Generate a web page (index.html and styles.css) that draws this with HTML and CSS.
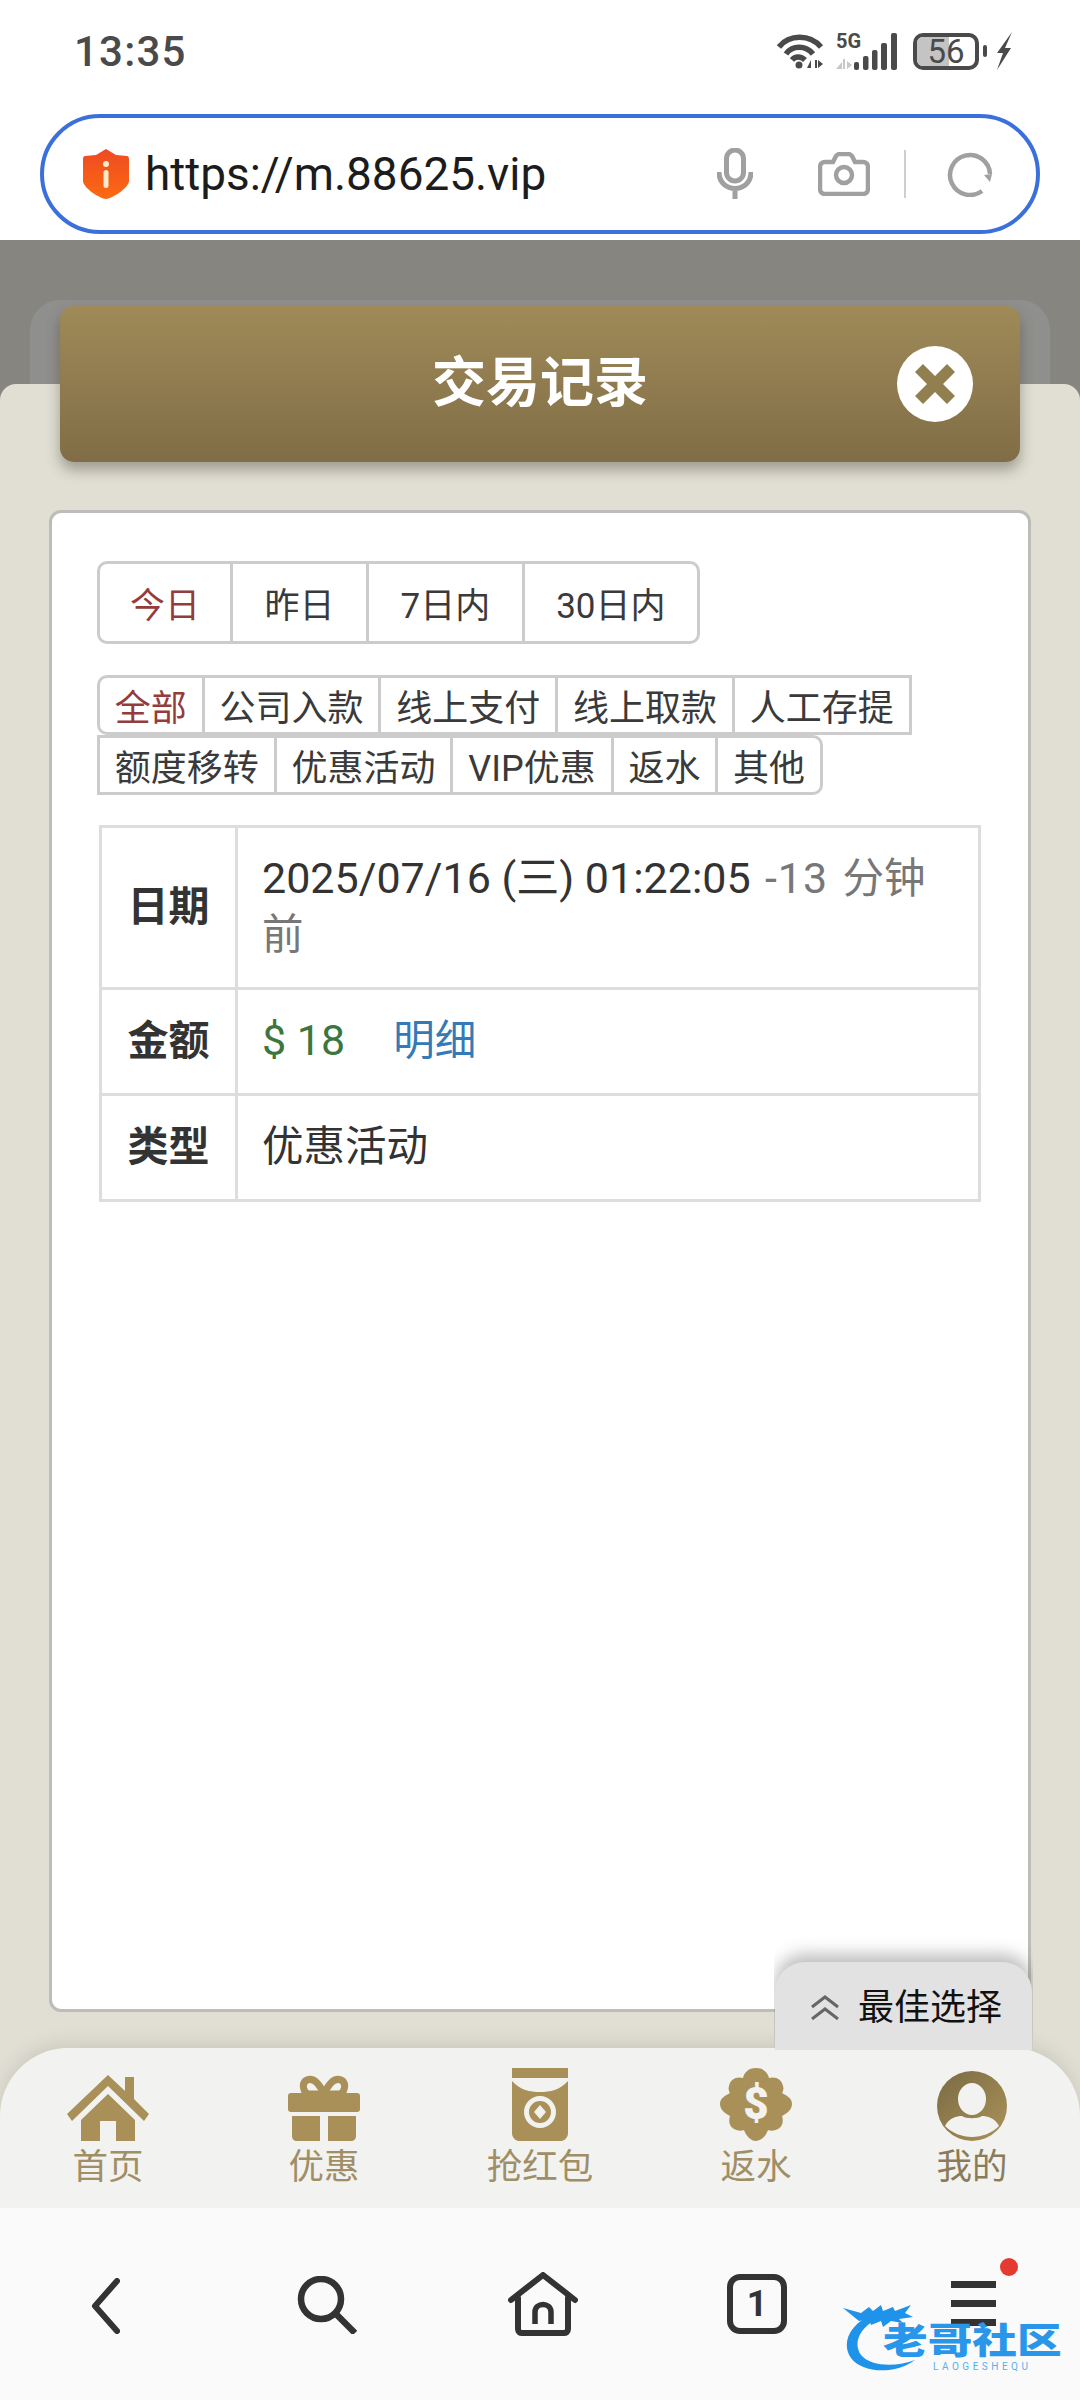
FILE: index.html
```html
<!DOCTYPE html>
<html lang="zh-CN">
<head>
<meta charset="utf-8">
<title>交易记录</title>
<link rel="stylesheet" href="styles.css">
</head>
<body>
<div class="app">
  <div class="status">
    <span class="time">13:35</span>
    <div class="status-icons">
      <svg class="ic-wifi" width="47" height="36" viewBox="0 0 47 36"><g fill="none" stroke="#4a4a4a" stroke-width="5.500"><path d="M2 14C12 1 33 1 44 14"/><path d="M9 21C15 12 29 12 36 21"/><path d="M15 27C18 23 24 23 28 27"/></g><circle cx="22" cy="32" r="3.500" fill="#4a4a4a"/><path d="M34 35v-8l-4 8zM38 27h2v8h-2zM41 27v8l5-4z" fill="#4a4a4a"/></svg>
      <div class="net">
        <span class="net-5g">5G</span>
        <svg width="62" height="38" viewBox="0 0 62 38"><path d="M1 36l6-7v7zM8 26h2v10H8zM12 28v8l5-4z" fill="#c8c8c8"/><g fill="#4a4a4a"><rect x="19" y="29" width="5" height="8" rx="2"/><rect x="28" y="23" width="5.500" height="14" rx="2"/><rect x="37" y="17" width="5.500" height="20" rx="2"/><rect x="46" y="10" width="6" height="27" rx="2"/><rect x="56" y="0" width="6" height="37" rx="2"/></g></svg>
      </div>
      <div class="battery"><span class="battery-fill"></span><span class="battery-num">56</span></div>
      <span class="battery-tip"></span>
      <svg width="16" height="38" viewBox="0 0 16 38"><path d="M16 0L1 21h6L1 38 15 16H9z" fill="#4a4a4a"/></svg>
    </div>
  </div>

  <div class="urlwrap">
    <div class="urlbar">
      <svg class="shield" width="46" height="50" viewBox="0 0 46 50"><defs><linearGradient id="sg" x1="0" y1="0" x2="0" y2="1"><stop offset="0" stop-color="#ef4a22"/><stop offset="1" stop-color="#fb6a12"/></linearGradient></defs><path d="M23 0l10 6 11 1c1 0 2 1 2 3v22c0 6-15 17-23 18C15 49 0 38 0 32V10c0-2 1-3 2-3l11-1z" fill="url(#sg)"/><circle cx="23" cy="15" r="3" fill="#ffe9c9"/><rect x="20.500" y="21" width="5" height="18" rx="2.500" fill="#ffe9c9"/></svg>
      <span class="url">https://m.88625.vip</span>
      <svg class="ic-mic" width="36" height="52" viewBox="0 0 36 52"><g fill="none" stroke="#a0a0a0"><rect x="9.500" y="2" width="17" height="31" rx="8.500" stroke-width="5"/><path d="M2 24c0 22 32 22 32 0M18 40v11" stroke-width="5"/></g></svg>
      <svg class="ic-cam" width="52" height="44" viewBox="0 0 52 44"><g fill="none" stroke="#a0a0a0" stroke-width="4.500"><path d="M7 10h8l3-6c1-1 2-2 3-2h10c1 0 2 1 3 2l3 6h8c3 0 5 2 5 5v22c0 3-2 5-5 5H7c-3 0-5-2-5-5V15c0-3 2-5 5-5z"/><circle cx="26" cy="23" r="8"/></g></svg>
      <span class="url-div"></span>
      <svg class="ic-reload" width="46" height="46" viewBox="0 0 46 46"><path d="M35 40A20 20 0 1 1 43 23" fill="none" stroke="#a0a0a0" stroke-width="4.500"/><path d="M37 24l8-1-2 8z" fill="#a0a0a0"/></svg>
    </div>
  </div>

  <div class="stage">
    <div class="backsheet"></div>
    <div class="panel">
      <div class="card">
        <div class="range">
          <span class="range-tab is-active">今日</span><span class="range-tab">昨日</span><span class="range-tab">7日内</span><span class="range-tab">30日内</span>
        </div>
        <div class="filters">
          <div class="filter-row">
            <span class="filter first is-active">全部</span><span class="filter">公司入款</span><span class="filter">线上支付</span><span class="filter">线上取款</span><span class="filter">人工存提</span>
          </div>
          <div class="filter-row">
            <span class="filter plain-first">额度移转</span><span class="filter">优惠活动</span><span class="filter">VIP优惠</span><span class="filter">返水</span><span class="filter last">其他</span>
          </div>
        </div>
        <table class="record">
          <tr><th>日期</th><td><span class="num">2025/07/16 (三) 01:22:05</span> <span class="ago ago-lead"><span class="num ago-num">-13</span> 分钟</span><span class="ago">前</span></td></tr>
          <tr><th>金额</th><td><span class="amount num">$ 18</span><span class="detail">明细</span></td></tr>
          <tr><th>类型</th><td>优惠活动</td></tr>
        </table>
      </div>
      <nav class="tabbar">
        <div class="tab">
          <svg width="82" height="66" viewBox="0 0 82 66"><path d="M41 11L77 46l5-7-15-15V2h-9v14L41 0 0 39l5 7z" fill="#a89058"/><path d="M41 19L14 45v21h19V46h16v20h19V45z" fill="#a89058"/></svg>
          <span>首页</span>
        </div>
        <div class="tab">
          <svg width="72" height="66" viewBox="0 0 72 66"><g fill="none" stroke="#a89058" stroke-width="7"><path d="M36 19C30 6 24 3 19 5c-6 3-4 13 2 14z"/><path d="M36 19C42 6 48 3 53 5c6 3 4 13-2 14z"/></g><rect x="0" y="18" width="72" height="19" rx="3" fill="#a89058"/><path d="M4 41h28v25H9c-3 0-5-2-5-5zM40 41h28v20c0 3-2 5-5 5H40z" fill="#a89058"/></svg>
          <span>优惠</span>
        </div>
        <div class="tab">
          <svg width="58" height="73" viewBox="0 0 58 73"><path d="M1 0h56v10H1z" fill="#a89058"/><path d="M1 13c8 9 18 11 28 11s20-2 28-11v52c0 4-3 8-7 8H8c-4 0-7-4-7-8z" fill="#a89058"/><circle cx="29" cy="44" r="13.500" fill="none" stroke="#f2f2f0" stroke-width="5"/><path d="M29 37l6 7-6 7-6-7z" fill="#f2f2f0"/></svg>
          <span>抢红包</span>
        </div>
        <div class="tab">
          <svg width="72" height="73" viewBox="0 0 72 73"><path d="M36 0c8 0 12 5 13 10 6-2 13 1 14 8 1 3 0 5-1 7 6 3 10 6 10 11s-4 9-10 12c2 6 0 11-4 13s-7 2-10 1c-2 6-7 11-12 11s-10-5-12-11c-3 1-6 1-10-1s-6-7-4-13C4 45 0 41 0 36s4-8 10-11c-1-2-2-4-1-7 1-7 8-10 14-8 1-5 5-10 13-10z" fill="#a89058"/><text x="36" y="51" class="coin">$</text></svg>
          <span>返水</span>
        </div>
        <div class="tab">
          <svg width="70" height="70" viewBox="0 0 70 70"><defs><linearGradient id="pg" x1="0" y1="0" x2="1" y2="1"><stop offset="0" stop-color="#7a6b45"/><stop offset="1" stop-color="#ab9258"/></linearGradient></defs><circle cx="35" cy="35" r="35" fill="url(#pg)"/><ellipse cx="35" cy="28" rx="14" ry="16" fill="#f2f2f0"/><path d="M8 55c4-8 12-10 17-10 4 3 16 3 20 0 5 0 13 2 17 10-7 7-17 11-27 11S15 62 8 55z" fill="#f2f2f0"/></svg>
          <span class="tab-dark">我的</span>
        </div>
      </nav>
    </div>
    <header class="title">
      <h1>交易记录</h1>
      <svg class="close" width="76" height="76" viewBox="0 0 76 76"><circle cx="38" cy="38" r="38" fill="#fff"/><path d="M26 18l12 12 12-12 8 8-12 12 12 12-8 8-12-12-12 12-8-8 12-12-12-12z" fill="#927f50"/></svg>
    </header>
    <div class="best"><svg width="28" height="25" viewBox="0 0 28 25"><g fill="none" stroke="#666" stroke-width="3"><path d="M1 12L14 2l13 10"/><path d="M1 24L14 14l13 10"/></g></svg><span>最佳选择</span></div>
  </div>

  <div class="browser">
    <svg width="30" height="56" viewBox="0 0 30 56"><path d="M27 3L5 28l22 25" fill="none" stroke="#333" stroke-width="6" stroke-linecap="round" stroke-linejoin="round"/></svg>
    <svg width="60" height="58" viewBox="0 0 60 58"><circle cx="24" cy="23" r="20" fill="none" stroke="#333" stroke-width="6.500"/><path d="M38 37l20 20" stroke="#333" stroke-width="6.500"/></svg>
    <svg width="70" height="64" viewBox="0 0 70 64"><g fill="none" stroke="#333" stroke-width="6" stroke-linecap="round" stroke-linejoin="round"><path d="M3 28L35 3l32 25"/><path d="M10 26v31c0 3 2 4 4 4h42c2 0 4-1 4-4V26"/></g><path d="M27 52V40c0-10 16-10 16 0v12" fill="none" stroke="#333" stroke-width="5.500"/></svg>
    <div class="tabs-count"><span>1</span></div>
    <div class="menu"><span class="bar"></span><span class="bar"></span><span class="bar"></span><span class="dot"></span></div>
    <div class="mark">
      <svg class="mark-dragon" width="100" height="76" viewBox="0 0 100 76"><path d="M30 14C6 24-2 44 8 58c10 14 42 18 64 2-18 7-44 7-54-5-8-11-2-26 14-35z" fill="#1f92ea"/><path d="M0 8l18 5 8-6 4 4 8-6 2 6 10-4 2 4 16-6-6 8 8 4-14 2 4 4-12-2-8 6-2-6-10 4-2-6-10 2z" fill="#1f92ea"/></svg>
      <span class="mark-cn">老哥社区</span>
      <span class="mark-en">LAOGESHEQU</span>
    </div>
  </div>
</div>
</body>
</html>
```
FILE: styles.css
```css
* { box-sizing: border-box; }
html, body { margin: 0; padding: 0; }
body {
  width: 1080px;
  height: 2400px;
  overflow: hidden;
  background: #fff;
  font-family: Roboto, "Noto Sans CJK SC", sans-serif;
  color: #333;
}
.app { display: flex; flex-direction: column; height: 2400px; }

.status {
  height: 100px;
  display: flex;
  align-items: center;
  justify-content: space-between;
  padding: 2px 68px 0 74px;
}
.time { font-size: 42px; font-weight: 500; color: #4a4a4a; letter-spacing: 1.200px; }
.status-icons { display: flex; align-items: center; }
.net { position: relative; margin-left: 11px; margin-top: 2px; }
.net svg { display: block; }
.net-5g {
  position: absolute; left: 1px; top: -4px;
  font-size: 20px; font-weight: 700; color: #4a4a4a; line-height: 24px;
}
.battery {
  position: relative;
  width: 66px; height: 37px;
  margin-left: 16px;
  border: 4px solid #4a4a4a;
  border-radius: 10px;
  overflow: hidden;
  text-align: center;
}
.battery-fill { position: absolute; left: 0; top: 0; bottom: 0; width: 56%; background: #c4c4c4; }
.battery-num { position: relative; font-size: 33px; line-height: 29px; color: #4a4a4a; display: block; }
.battery-tip { width: 4px; height: 12px; margin: 0 9px 0 4px; background: #4a4a4a; border-radius: 2px; }

.urlwrap { height: 140px; padding: 14px 40px 6px; }
.urlbar {
  height: 120px;
  border: 4px solid #3b70dc;
  border-radius: 60px;
  display: flex;
  align-items: center;
  padding-left: 39px;
  background: #fff;
}
.shield { flex: none; }
.url { margin-left: 16px; width: 400px; font-size: 45.900px; color: #1c1c1c; flex: none; white-space: nowrap; }
.ic-mic { margin-left: 172px; flex: none; }
.ic-cam { margin-left: 65px; flex: none; }
.url-div { width: 2px; height: 48px; margin-left: 34px; background: #cfcfcf; flex: none; }
.ic-reload { margin-left: 41px; flex: none; }

.stage {
  position: relative;
  flex: 1;
  display: flex;
  flex-direction: column;
  background: #868580;
  padding-top: 144px;
}
.backsheet {
  position: absolute;
  left: 30px; right: 30px; top: 60px;
  height: 100px;
  background: #8f8f8d;
  border-radius: 30px 30px 0 0;
}
.panel {
  position: relative;
  flex: 1;
  display: flex;
  flex-direction: column;
  background: #e1dfd4;
  border-radius: 16px 16px 0 0;
  padding-top: 126px;
}
.title {
  position: absolute;
  left: 60px; right: 60px; top: 66px;
  height: 156px;
  display: flex;
  align-items: center;
  justify-content: center;
  border-radius: 14px;
  background: linear-gradient(180deg, #9f8a58, #806d46);
  box-shadow: 0 8px 14px rgba(60, 55, 40, .4);
}
.title h1 { margin: 0; font-size: 54px; font-weight: 700; color: #fff; line-height: 1; }
.close { position: absolute; right: 47px; top: 40px; }

.card {
  flex: none;
  height: 1502px;
  margin: 0 49px 0 49px;
  padding: 48px 45px 0;
  background: #fff;
  border: 3px solid #bcbcb8;
  border-radius: 12px;
}
.range { display: inline-flex; height: 83px; border: 3px solid #ccc; border-radius: 10px; vertical-align: top; color: #3a3a3a; }
.range-tab {
  display: flex;
  align-items: center;
  padding: 0 31.500px;
  font-size: 35px;
  border-left: 3px solid #ccc;
}
.range-tab:first-child { border-left: 0; padding: 0 30px; }
.range-tab.is-active, .filter.is-active { color: #943c3c; }
.filters { margin-top: 31px; color: #3a3a3a; }
.filter-row { display: flex; height: 60px; }
.filter {
  display: flex;
  align-items: center;
  height: 60px;
  padding: 0 14.850px;
  font-size: 36px;
  border: 3px solid #ccc;
  margin-left: -3px;
  background: #fff;
}
.filter.first { margin-left: 0; border-radius: 10px 0 0 10px; }
.filter.plain-first { margin-left: 0; }
.filter.last { border-radius: 0 10px 10px 0; }

.record {
  width: 882px;
  margin: 30px 0 0 2px;
  border-collapse: collapse;
  border: 3px solid #ddd;
  font-size: 41.500px;
  line-height: 56px;
}
.record th, .record td { border: 3px solid #ddd; padding: 23px 24px 24px; }
.record th { width: 136px; padding: 23px 0 24px; text-align: center; font-weight: 700; font-size: 41px; color: #333; }
.num { font-size: 43px; line-height: 1; }
.ago { color: #777; }
.ago-lead { margin-left: 4px; word-spacing: 4px; }
.ago-num { letter-spacing: 1px; }
.amount { color: #3c763d; }
.detail { color: #337ab7; margin-left: 48px; }

.tabbar {
  flex: 1;
  position: relative;
  margin-top: 36px;
  display: grid;
  grid-template-columns: repeat(5, 216px);
  background: #f2f2f0;
  border-radius: 68px 68px 0 0;
  box-shadow: 0 -6px 16px rgba(120, 120, 110, .18);
}
.tab {
  height: 159px;
  display: flex;
  flex-direction: column;
  align-items: center;
  justify-content: flex-end;
  padding-bottom: 19px;
  font-size: 35.500px;
  line-height: 42px;
  color: #a08e66;
}
.tab svg { display: block; margin-bottom: 5px; }
.tab-dark { color: #8a7c58; }
.coin { font-family: Roboto, sans-serif; font-size: 44px; font-weight: 900; fill: #f2f2f0; text-anchor: middle; }

.best {
  position: absolute;
  left: 775px; top: 1722px;
  width: 257px; height: 88px;
  padding: 0 0 0 36px;
  display: flex;
  align-items: flex-start;
  gap: 19px;
  background: #e2e2e2;
  border-radius: 30px 30px 0 0;
  box-shadow: 0 -8px 16px rgba(70, 70, 70, .35);
  clip-path: inset(-30px -1px 0 -1px);
  font-size: 36px;
  line-height: 92px;
  color: #111;
}
.best svg { margin-top: 33px; }

.browser {
  position: relative;
  height: 192px;
  flex: none;
  background: #fafafa;
}
.browser > svg { position: absolute; }
.browser > svg:nth-child(1) { left: 90px; top: 70px; }
.browser > svg:nth-child(2) { left: 297px; top: 68px; }
.browser > svg:nth-child(3) { left: 508px; top: 64px; }
.tabs-count {
  position: absolute;
  left: 727px; top: 66px;
  width: 60px; height: 60px;
  border: 6px solid #333;
  border-radius: 13px;
  display: flex;
  align-items: center;
  justify-content: center;
  font-size: 36px;
  font-weight: 700;
  color: #333;
}
.menu {
  position: absolute;
  left: 951px; top: 73px;
  width: 45px;
  display: flex;
  flex-direction: column;
  gap: 12px;
}
.bar { height: 7px; background: #333; }
.dot { position: absolute; left: 49px; top: -23px; width: 18px; height: 18px; border-radius: 50%; background: #e53a30; }
.mark { position: absolute; left: 843px; top: 92px; width: 230px; height: 76px; }
.mark-dragon { position: absolute; left: 0; top: 0; }
.mark-cn {
  position: absolute; left: 40px; top: 24px;
  font-size: 36px; line-height: 36px; font-weight: 900;
  color: #2a96ea; white-space: nowrap;
  transform: scaleX(1.24);
  transform-origin: left center;
}
.mark-en {
  position: absolute; left: 90px; top: 61px;
  font-size: 10px; line-height: 12px; letter-spacing: 3.500px; color: #5aaeea; white-space: nowrap;
}
```
